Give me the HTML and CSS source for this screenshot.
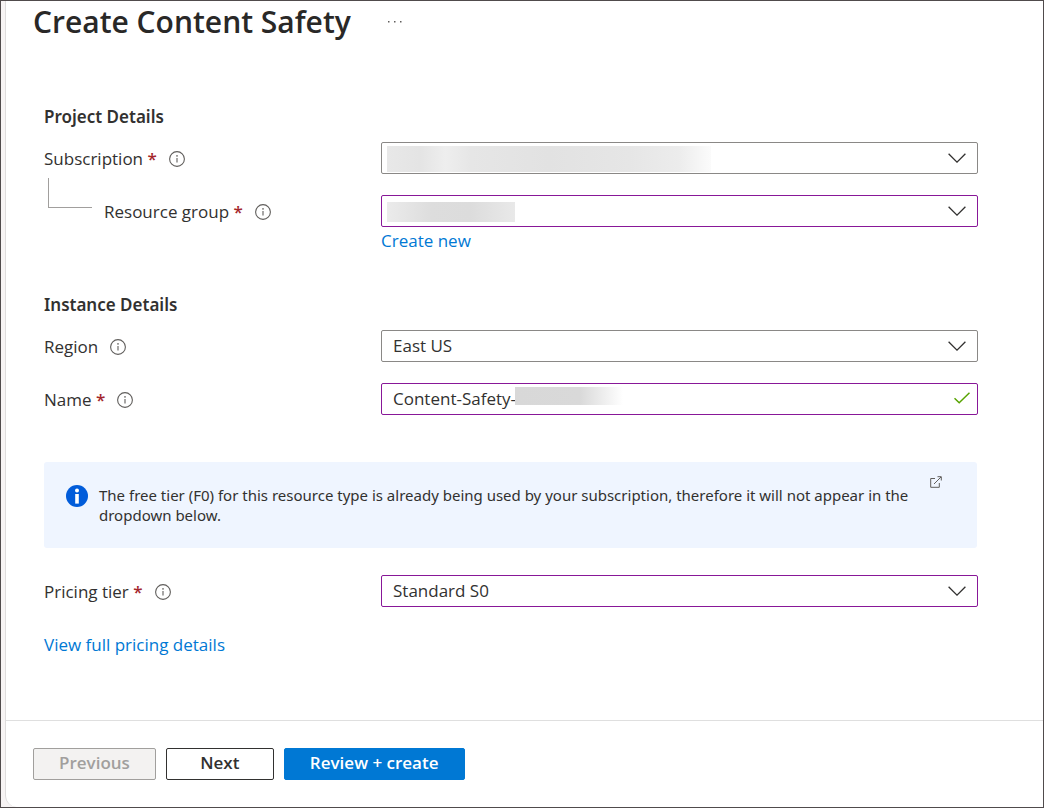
FILE: index.html
```html
<!DOCTYPE html>
<html lang="en">
<head>
<meta charset="utf-8">
<meta name="viewport" content="width=device-width, initial-scale=1">
<title>Create Content Safety</title>
<link rel="stylesheet" href="styles.css">
</head>
<body>
<svg class="sprite" aria-hidden="true">
  <symbol id="info" viewBox="0 0 16 16"><circle cx="8" cy="8" r="7.4" fill="none" stroke="currentColor" stroke-width="1.1"/><path d="M8 7v4.6" stroke="currentColor" stroke-width="1.1"/><circle cx="8" cy="4.9" r=".8" fill="currentColor"/></symbol>
  <symbol id="chevron" viewBox="0 0 18 10"><path d="M.6.7 9 9.1 17.4.7" fill="none" stroke="currentColor" stroke-width="1.3"/></symbol>
</svg>
<div class="panel">
  <header class="header">
    <h1 class="title">Create Content Safety</h1>
    <button class="more" type="button" aria-label="More actions">
      <svg width="16" height="4" viewBox="0 0 16 4" fill="currentColor"><path d="M1 1h1.5v1.5H1zM7 1h1.5v1.5H7zM13 1h1.5v1.5H13z"/></svg>
    </button>
  </header>
  <form class="form" id="create">
    <section class="section">
      <h2 class="heading">Project Details</h2>
      <div class="rows">
        <div class="row">
          <div class="caption"><label for="subscription">Subscription <span class="required">*</span></label><svg class="info"><use href="#info"/></svg></div>
          <div class="field">
            <select class="box" id="subscription"><option></option></select>
            <span class="mask mask-subscription"></span>
            <svg class="chevron"><use href="#chevron"/></svg>
          </div>
        </div>
        <div class="row">
          <div class="caption nested"><span class="branch"></span><label for="group">Resource group <span class="required">*</span></label><svg class="info"><use href="#info"/></svg></div>
          <div class="field">
            <select class="box changed" id="group"><option></option></select>
            <span class="mask mask-group"></span>
            <svg class="chevron"><use href="#chevron"/></svg>
          </div>
          <a class="link below" href="#new">Create new</a>
        </div>
      </div>
    </section>
    <section class="section instance">
      <h2 class="heading">Instance Details</h2>
      <div class="rows">
        <div class="row">
          <div class="caption"><label for="region">Region</label><svg class="info"><use href="#info"/></svg></div>
          <div class="field">
            <select class="box" id="region"><option>East US</option></select>
            <svg class="chevron"><use href="#chevron"/></svg>
          </div>
        </div>
        <div class="row">
          <div class="caption"><label for="name">Name <span class="required">*</span></label><svg class="info"><use href="#info"/></svg></div>
          <div class="field">
            <input class="box changed" id="name" type="text" value="Content-Safety-">
            <span class="mask mask-name"></span>
            <svg class="check" viewBox="0 0 16 12"><path d="M.5 6.2 5.2 10.8 15.5.7" fill="none" stroke="currentColor" stroke-width="1.5"/></svg>
          </div>
        </div>
      </div>
    </section>
    <div class="notice">
      <svg class="notice-icon" viewBox="0 0 22 22"><circle cx="11" cy="11" r="11" fill="#015cda"/><circle cx="11" cy="5.6" r="2" fill="#fff"/><path d="M9.2 9h3.6v9.6H9.2z" fill="#fff"/></svg>
      <p class="notice-text">The free tier (F0) for this resource type is already being used by your subscription, therefore it will not appear in the dropdown below.</p>
      <a class="external" href="#details" aria-label="Open details"><svg width="12" height="12" viewBox="0 0 12 12" fill="none" stroke="currentColor"><path d="M5 2.5H.7v8.8h8.6V7M4 8l7-7M7.5.7h3.8v3.8"/></svg></a>
    </div>
    <div class="row">
      <div class="caption"><label for="tier">Pricing tier <span class="required">*</span></label><svg class="info"><use href="#info"/></svg></div>
      <div class="field">
        <select class="box changed" id="tier"><option>Standard S0</option></select>
        <svg class="chevron"><use href="#chevron"/></svg>
      </div>
    </div>
    <a class="link pricing" href="#pricing">View full pricing details</a>
  </form>
  <footer class="footer">
    <button class="button" type="button" disabled>Previous</button>
    <button class="button next" type="button">Next</button>
    <button class="button primary" type="submit" form="create">Review + create</button>
  </footer>
</div>
</body>
</html>
```
FILE: styles.css
```css
* { box-sizing: border-box; }

body {
  margin: 0;
  min-height: 100vh;
  display: flex;
  padding-left: 4px;
  border: 1px solid #504b4c;
  background: #f7f4f4;
  color: #323130;
  font: 17px/24px "Open Sans", "Noto Sans", sans-serif;
}

.sprite { display: none; }

.panel {
  flex: 1;
  min-width: 0;
  display: flex;
  flex-direction: column;
  border-left: 1px solid #dedcdc;
  border-bottom-left-radius: 12px;
  background: #fff;
}

.header {
  display: flex;
  align-items: center;
  gap: 36px;
  padding-left: 27px;
  height: 42px;
}

.title {
  margin: 0;
  font-size: 30px;
  line-height: 40px;
  font-weight: 600;
  color: #292827;
}

.more {
  display: flex;
  padding: 0;
  border: 0;
  background: none;
  color: #605e5c;
}

.form {
  flex: 1;
  padding: 62px 65px 60px 38px;
}

.heading {
  margin: 0 0 13px;
  font-family: "Noto Sans", "Open Sans", sans-serif;
  font-size: 17px;
  line-height: 24px;
  font-weight: 600;
}

.rows {
  display: grid;
  gap: 21px;
}

.row {
  display: grid;
  grid-template-columns: 337px 1fr;
}

.instance { margin-top: 42px; }

.caption {
  display: flex;
  align-items: center;
  gap: 12px;
  height: 34px;
  margin-bottom: -2px;
}

.nested { padding-left: 4px; }

.branch {
  align-self: flex-start;
  width: 44px;
  height: 30px;
  margin-top: -17px;
  border: solid #a19f9d;
  border-width: 0 0 1px 1px;
}

.required {
  color: #a4262c;
  font-weight: 600;
}

.info {
  width: 16px;
  height: 16px;
  color: #605e5c;
}

.field { position: relative; }

.box {
  display: block;
  width: 100%;
  height: 32px;
  padding: 0 11px;
  border: 1px solid #8a8886;
  border-radius: 2px;
  background: #fff;
  color: #323130;
  font: inherit;
  appearance: none;
}

.changed { border-color: #881798; }

input.box { padding-bottom: 2px; }

.chevron,
.check,
.mask {
  position: absolute;
  pointer-events: none;
}

.chevron {
  top: 11px;
  right: 12px;
  width: 18px;
  height: 10px;
}

.check {
  top: 9px;
  right: 8px;
  width: 16px;
  height: 12px;
  color: #57a300;
}

.mask { left: 6px; }

.mask-subscription {
  top: 4px;
  width: 324px;
  height: 26px;
  background: linear-gradient(90deg, #e8e8e8, #e4e4e4 10%, #eeeeee 18%, #e6e6e6 26%, #e2e2e2 50%, #e6e6e6 75%, #ececec 90%, #fbfbfb);
}

.mask-group {
  top: 7px;
  width: 128px;
  height: 20px;
  background: linear-gradient(90deg, #ebebeb, #dddddd 35%, #dcdcdc 65%, #e9e9e9);
}

.mask-name {
  top: 4px;
  left: 134px;
  width: 108px;
  height: 18px;
  background: linear-gradient(90deg, #d8d8d8, #d9d9d9 60%, #fff);
}

.link {
  color: #0078d4;
  line-height: 20px;
  text-decoration: none;
}

.below {
  grid-column: 2;
  justify-self: start;
  margin-top: 4px;
}

.pricing {
  display: inline-block;
  margin-top: 28px;
}

.notice {
  display: flex;
  align-items: flex-start;
  min-height: 86px;
  margin: 47px 1px 27px 0;
  padding: 14px 35px 14px 22px;
  border-radius: 3px;
  background: #eff5ff;
}

.notice-icon {
  flex: none;
  width: 22px;
  height: 22px;
  margin: 9px 11px 0 0;
}

.notice-text {
  flex: 1;
  margin: 9px 0 0;
  font-family: "Noto Sans", "Open Sans", sans-serif;
  font-size: 15px;
  line-height: 20px;
}

.external {
  display: flex;
  margin-left: 4px;
  color: #605e5c;
}

.footer {
  display: flex;
  gap: 10px;
  padding: 27px;
  border-top: 1px solid #dfdfdf;
}

.button {
  min-width: 108px;
  height: 32px;
  padding: 0 25px 2px;
  border: 1px solid #323130;
  border-radius: 2px;
  background: #fff;
  color: #323130;
  font: 600 17px/24px "Open Sans", "Noto Sans", sans-serif;
}

.button:disabled {
  border-color: #a19f9d;
  background: #f3f2f1;
  color: #a19f9d;
}

.primary {
  border-color: #0078d4;
  background: #0078d4;
  color: #fff;
}
```
